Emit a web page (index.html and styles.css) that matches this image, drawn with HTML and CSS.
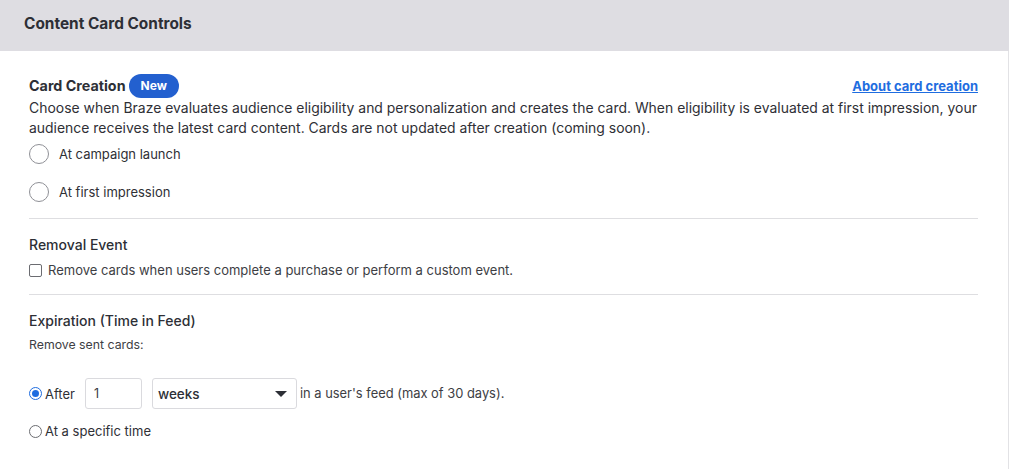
FILE: index.html
```html
<!DOCTYPE html>
<html>
<head>
<meta charset="utf-8">
<link rel="stylesheet" href="styles.css">
</head>
<body>
<div class="card">
  <div class="card-header">Content Card Controls</div>
  <div class="card-body">
    <section class="section">
      <div class="title-row">
        <div class="title">Card Creation <span class="badge">New</span></div>
        <a class="link" href="#">About card creation</a>
      </div>
      <p class="desc">Choose when Braze evaluates audience eligibility and personalization and creates the card. When eligibility is evaluated at first impression, your audience receives the latest card content. Cards are not updated after creation (coming soon).</p>
      <label class="big-radio"><span class="circle"></span>At campaign launch</label>
      <label class="big-radio"><span class="circle"></span>At first impression</label>
    </section>
    <hr class="divider">
    <section class="section">
      <div class="subtitle">Removal Event</div>
      <label class="check-row"><span class="box"></span>Remove cards when users complete a purchase or perform a custom event.</label>
    </section>
    <hr class="divider divider-tight">
    <section class="section">
      <div class="subtitle">Expiration (Time in Feed)</div>
      <div class="small-text sent">Remove sent cards:</div>
      <div class="after-row">
        <span class="radio checked"></span>
        <span class="after-label">After</span>
        <span class="num-input">1</span>
        <span class="select">weeks<span class="caret"></span></span>
        <span class="small-text feed">in a user's feed (max of 30 days).</span>
      </div>
      <div class="specific-row">
        <span class="radio"></span>
        <span class="specific-label">At a specific time</span>
      </div>
    </section>
  </div>
</div>
</body>
</html>
```
FILE: styles.css
```css
* { box-sizing: border-box; }
html, body { margin: 0; padding: 0; background: #fff; }
body {
  font-family: Inter, "Noto Sans", sans-serif;
  color: #393a3f;
  width: 1010px;
  height: 469px;
  overflow: hidden;
}
.card {
  width: 1009px;
  border-right: 1px solid #e2e2e5;
  min-height: 469px;
}
.card-header {
  background: #dedde2;
  height: 51px;
  padding: 14px 0 0 24px;
  font-size: 15.4px;
  font-weight: 700;
  color: #2d2f36;
  margin-right: -1px;
}
.card-body {
  padding: 22px 30px 0 29px;
}
.title-row {
  display: flex;
  justify-content: space-between;
  align-items: center;
  height: 25px;
}
.title {
  font-size: 14.3px;
  font-weight: 700;
  color: #2d2f36;
  display: flex;
  align-items: center;
}
.badge {
  display: inline-block;
  background: #2360cf;
  color: #fff;
  font-size: 12px;
  font-weight: 700;
  border-radius: 12px;
  height: 24px;
  line-height: 24px;
  padding: 0 12px;
  margin-left: 3px;
}
.link {
  color: #1f6de0;
  font-weight: 700;
  font-size: 13px;
  text-decoration: underline;
  margin-top: 1px;
}
.desc {
  margin: 0;
  font-size: 13.94px;
  line-height: 20px;
  color: #2f3036;
}
.big-radio {
  display: flex;
  align-items: center;
  height: 20px;
  font-size: 13px;
  color: #2f3036;
  margin-top: 6px;
}
.big-radio + .big-radio { margin-top: 18px; }
.circle {
  width: 20px;
  height: 20px;
  border: 1px solid #8f9096;
  border-radius: 50%;
  margin-right: 10px;
}
.divider {
  border: 0;
  border-top: 1px solid #dedee1;
  margin: 16px 0 16px;
}
.divider-tight { margin-top: 14px; }
.subtitle {
  font-size: 14px;
  font-weight: 500;
  color: #2d2f36;
  height: 20px;
  line-height: 20px;
}
.check-row {
  display: flex;
  align-items: center;
  font-size: 13px;
  color: #3d3e44;
  margin-top: 5px;
  height: 20px;
}
.box {
  width: 13px;
  height: 13px;
  border: 1px solid #6b6c71;
  border-radius: 2px;
  margin-right: 6px;
}
.small-text {
  font-size: 12.5px;
  color: #3d3e44;
}
.small-text.sent { font-size: 12.3px; margin-top: 5px; line-height: 18px; }
.small-text.feed { font-size: 12.9px; }
.after-row {
  display: flex;
  align-items: center;
  margin-top: 24px;
  height: 31px;
}
.radio {
  width: 13px;
  height: 13px;
  border: 1px solid #6b6c71;
  border-radius: 50%;
  position: relative;
  flex: none;
}
.radio.checked {
  border-color: #1f6de0;
  background: #fff;
}
.radio.checked::after {
  content: "";
  position: absolute;
  left: 2px; top: 2px;
  width: 7px; height: 7px;
  border-radius: 50%;
  background: #1f6de0;
}
.after-label, .specific-label {
  font-size: 13px;
  color: #2f3036;
  margin-left: 3px;
}
.num-input {
  margin-left: 10px;
  width: 57px;
  height: 31px;
  border: 1px solid #dadade;
  border-radius: 3px;
  font-size: 12.5px;
  padding-left: 8px;
  line-height: 29px;
}
.select {
  margin-left: 10px;
  width: 145px;
  height: 31px;
  border: 1px solid #dadade;
  border-radius: 3px;
  font-size: 13.5px;
  font-weight: 500;
  color: #2d2f36;
  padding: 0 9px 0 5px;
  display: flex;
  align-items: center;
  justify-content: space-between;
  margin-right: 3px;
}
.caret {
  width: 0; height: 0;
  border-left: 6px solid transparent;
  border-right: 6px solid transparent;
  border-top: 6px solid #2d2f36;
}
.specific-row {
  display: flex;
  align-items: center;
  margin-top: 12px;
  height: 20px;
}
```
